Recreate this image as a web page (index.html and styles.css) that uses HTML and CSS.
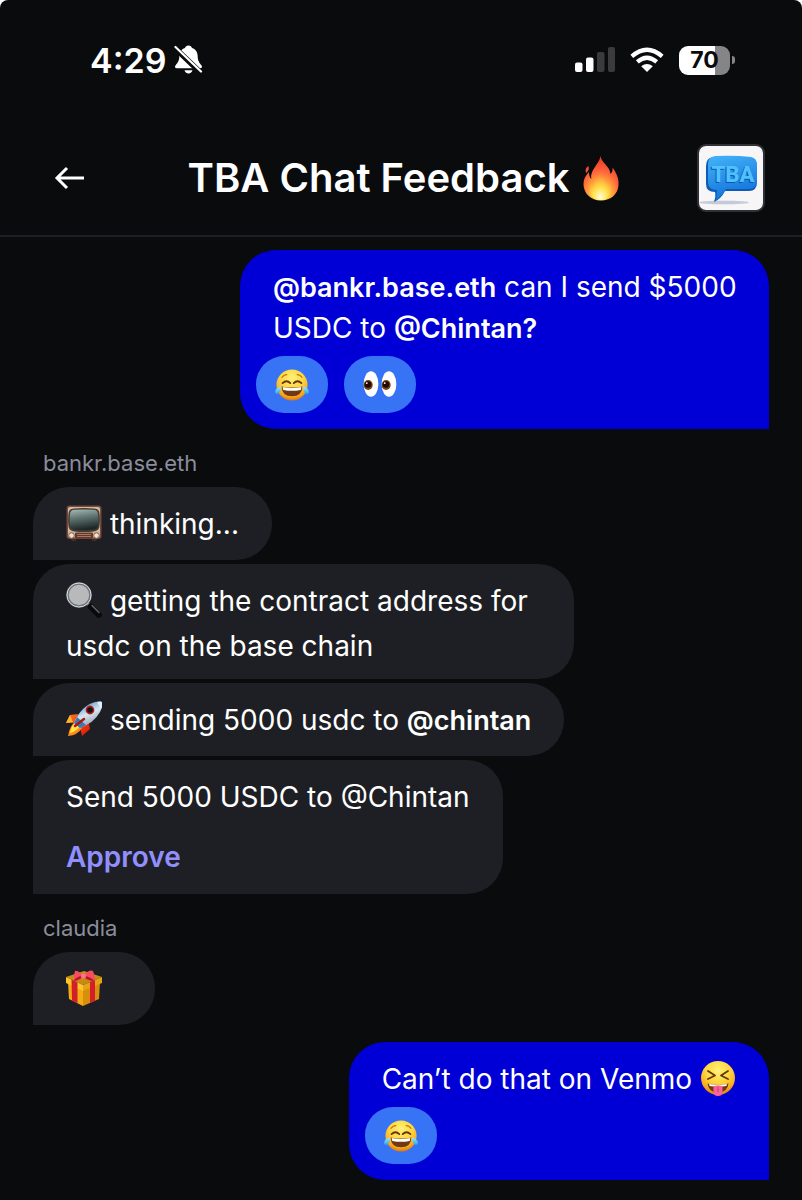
FILE: index.html
```html
<!DOCTYPE html>
<html lang="en">
<head>
<meta charset="utf-8">
<meta name="viewport" content="width=device-width, initial-scale=1">
<title>TBA Chat Feedback</title>
<link rel="stylesheet" href="styles.css">
</head>
<body>
<svg class="defs" aria-hidden="true">
  <defs>
    <radialGradient id="face" cx=".5" cy=".28" r=".72"><stop offset="0" stop-color="#fff27a"/><stop offset=".5" stop-color="#ffd63d"/><stop offset=".82" stop-color="#f9aa20"/><stop offset="1" stop-color="#dc7510"/></radialGradient>
    <linearGradient id="tear" x2="0" y2="1"><stop stop-color="#9eeaff"/><stop offset="1" stop-color="#28a5e4"/></linearGradient>
    <radialGradient id="fire" cx=".48" cy=".88" r=".85"><stop offset="0" stop-color="#fffac0"/><stop offset=".2" stop-color="#ffe24a"/><stop offset=".43" stop-color="#ff9e38"/><stop offset=".65" stop-color="#ff623c"/><stop offset="1" stop-color="#e83a1e"/></radialGradient>
    <radialGradient id="flame" cx=".5" cy=".9" r=".8"><stop stop-color="#fffde0"/><stop offset=".45" stop-color="#ffdf45"/><stop offset="1" stop-color="#ff903d" stop-opacity=".2"/></radialGradient>
    <linearGradient id="screen" x2=".2" y2="1"><stop stop-color="#a8bbb8"/><stop offset=".45" stop-color="#617573"/><stop offset="1" stop-color="#1d2929"/></linearGradient>
    <linearGradient id="hull" x1=".3" y1="0" x2=".8" y2="1"><stop stop-color="#4c8ac9"/><stop offset=".45" stop-color="#d7e7f2"/><stop offset="1" stop-color="#7c8999"/></linearGradient>
    <linearGradient id="fin" x2="1" y2="1"><stop stop-color="#ff7a21"/><stop offset="1" stop-color="#d91208"/></linearGradient>
    <linearGradient id="bubble" x2=".3" y2="1"><stop stop-color="#43b4f8"/><stop offset="1" stop-color="#1473dc"/></linearGradient>
    <symbol id="joy" viewBox="0 0 36 36">
      <circle cx="18" cy="18" r="16.5" fill="url(#face)"/>
      <path d="M7.5 9.8q2-2.8 5-2.8M23.5 7q3 0 5 2.8" fill="none" stroke="#b96d12" stroke-width="1.3" stroke-linecap="round"/>
      <path d="M8 16q4.200-4 8.200 0M19.800 16q4-4 8.200 0" fill="none" stroke="#65360d" stroke-width="1.900" stroke-linecap="round"/>
      <path d="M7 19.500q11 2.500 22 0-.5 10.500-11 10.500T7 19.500z" fill="#713814"/>
      <path d="M8 20q10 2.300 20 0l-.8 3.200q-9.200 2-18.400 0z" fill="#fff"/>
      <path d="M6.500 19.500C2.500 20.200-.3 23.200.2 26c1 3.200 5.800 1.400 6.300-6.500zM29.500 19.500c4 .7 6.800 3.700 6.300 6.500-1 3.200-5.800 1.400-6.300-6.500z" fill="url(#tear)"/>
    </symbol>
  </defs>
</svg>

<header class="top">
  <div class="status">
    <div class="status-group time-group">
      <span class="time">4:29</span>
      <svg width="29" height="32" viewBox="0 0 29 32" role="img" aria-label="Silent mode">
        <path d="M14.500 1.500c-2 0-3 1-3.500 2.400C7 5.200 5.300 8.300 5.300 12.500c0 4.500-2 6.700-4 9.200-.8 1.300 0 2.600 1.400 2.600h23.600c1.400 0 2.200-1.300 1.400-2.600-2-2.500-4-4.700-4-9.200C23.700 8.300 22 5.200 18 3.900c-.5-1.400-1.500-2.400-3.500-2.400zM10.500 26.300h8c-.4 2-2 3.200-4 3.200s-3.600-1.200-4-3.200z" fill="#fff"/>
        <path d="M2 5l25 24" stroke="#0a0b0d" stroke-width="5.500"/>
        <path d="M1.500 3L27 27.500" stroke="#fff" stroke-width="2.200" stroke-linecap="round"/>
      </svg>
    </div>
    <div class="status-group">
      <svg width="40" height="26" viewBox="0 0 40 26" role="img" aria-label="Signal, two bars of four"><rect y="15.500" width="7.500" height="9.500" rx="2" fill="#fff"/><rect x="11" y="10.500" width="7.500" height="14.500" rx="2" fill="#fff"/><rect x="22" y="5" width="7.500" height="20" rx="2" fill="#3b3b3d"/><rect x="33" y="0" width="7" height="25" rx="2" fill="#3b3b3d"/></svg>
      <svg width="34" height="26" viewBox="0 0 34 26" role="img" aria-label="Wi-Fi"><path d="M1.800 9.300q15.200-13.200 30.400 0M7.300 14.900q9.700-8.200 19.400 0" fill="none" stroke="#fff" stroke-width="4.200"/><path d="M11.200 19.300q5.800-4.500 11.600 0L17 25z" fill="#fff"/></svg>
      <div class="battery"><span class="battery-level">70</span></div>
    </div>
  </div>
  <div class="nav">
    <button class="back" type="button" aria-label="Back">
      <svg width="30" height="24" viewBox="0 0 30 24"><path d="M13 2L3 12l10 10M2.500 12H30" fill="none" stroke="#fff" stroke-width="3"/></svg>
    </button>
    <h1 class="title">TBA Chat Feedback
      <svg class="title-icon" viewBox="0 0 36 46" role="img" aria-label="Fire">
        <path d="M17.500 1C18.500 8 27 11 27.500 19c2-2 2.300-4 2-6.500 4 5.500 6.500 11 6 17.500C35 39 28 45.500 18 45.500S.5 38.500.5 29c0-5 2-8.500 5.500-12 0 3 .6 5.500 2.200 7C7 14 16 10 17.500 1zM5.500 11c-3 1.800-3.200 4-2.500 7 2.500-2 3.300-4 2.500-7z" fill="url(#fire)"/>
        <path d="M17 17c1 6 5 7 6 13 1.700-1 2.500-3 2.500-5 3 5 4 10 .5 15-2 3-5 5-8.500 5-7 0-12-6-11-12 .3-2 1-3.500 2-5 0 2.500 1 4 2.500 5C10.500 25 17 24 17 17z" fill="url(#flame)"/>
      </svg>
    </h1>
    <button class="avatar" type="button" aria-label="Group details">
      <svg viewBox="0 0 64 64">
        <rect width="64" height="64" fill="#f7f5f5"/>
        <ellipse cx="25" cy="56.500" rx="25" ry="1.800" fill="#c3cbdb"/>
        <path d="M14 11q20-2 38 1 6 1 6 9v15q0 9-8 9H26Q22 53 15 56q2-6 1-10-9 0-9-8V20q0-8 7-9z" fill="#0b5cb6"/>
        <path d="M16 10q20-1 36 1 6 1 6 8v15q0 9-8 9H27q-4 7-10 11 1-6 1-10-9 0-9-8V18q0-7 7-8z" fill="url(#bubble)"/>
        <text class="logo-shadow" x="33" y="37" text-anchor="middle">TBA</text>
        <text class="logo-text" x="34" y="35.500" text-anchor="middle">TBA</text>
      </svg>
    </button>
  </div>
</header>

<main class="chat">
  <section class="group sent">
    <div class="bubble out wide">
      <p class="text"><b>@bankr.base.eth</b> can I send $5000 USDC to <b>@Chintan?</b></p>
      <div class="reactions">
        <button class="reaction" type="button" aria-label="Tears of joy"><svg class="emoji-small"><use href="#joy"/></svg></button>
        <button class="reaction" type="button" aria-label="Eyes">
          <svg class="emoji-small" viewBox="0 0 36 36"><g fill="#fff"><ellipse cx="8.500" cy="17" rx="7.800" ry="13.500"/><ellipse cx="27.500" cy="17" rx="7.800" ry="13.500"/></g><g fill="#7b4312"><ellipse cx="5.500" cy="18" rx="4.800" ry="5.300"/><ellipse cx="24.500" cy="18" rx="4.800" ry="5.300"/></g><g fill="#1c0a04"><circle cx="5.300" cy="17.500" r="3.500"/><circle cx="24.300" cy="17.500" r="3.500"/></g><g fill="#fff"><circle cx="4" cy="16" r="1"/><circle cx="23" cy="16" r="1"/></g></svg>
        </button>
      </div>
    </div>
  </section>

  <section class="group">
    <h2 class="sender">bankr.base.eth</h2>
    <p class="bubble in"><svg class="emoji" viewBox="0 0 36 36" role="img" aria-label="Television"><path d="M4 33h6v3H6zM26 33h6l-2 3h-4z" fill="#4a2b21"/><rect x=".5" y=".5" width="35" height="33.500" rx="3" fill="#77493b"/><rect x="2" y="2" width="32" height="30.500" rx="2" fill="#d0baa0"/><path d="M8 3.500q10-1 20 0 5 0 5.500 5 .8 7 0 13-.5 4-5.500 5-10 1-20 0-5-1-5.500-5-.8-6 0-13 .5-5 5.500-5z" fill="#443a32"/><path d="M8.500 4.800q9.500-.8 19 0 4 .2 4.500 4 .7 6 0 12-.4 3.500-4.500 4-9.500.8-19 0-4.100-.5-4.500-4-.7-6 0-12 .5-3.800 4.500-4z" fill="url(#screen)"/><rect x="9" y="27.500" width="18" height="6" rx="1" fill="#64392d"/><path d="M11 29.500h14M11 31.500h14" stroke="#a57861"/><circle cx="5.500" cy="30.500" r="2.800" fill="#efe1cb" stroke="#815746"/><circle cx="30.500" cy="30.500" r="2.800" fill="#efe1cb" stroke="#815746"/></svg> thinking...</p>
    <p class="bubble in two-line"><svg class="emoji" viewBox="0 0 36 36" role="img" aria-label="Magnifying glass"><path d="M21 21l4 4" stroke="#9ba0a4" stroke-width="3"/><path d="M24.500 24.500l8.300 8.300" stroke="#08090b" stroke-width="6" stroke-linecap="round"/><path d="M26 23.500l7 7" stroke="#63666b" stroke-width="1.500" stroke-linecap="round"/><circle cx="13" cy="13" r="11.500" fill="#b7b9bb" stroke="#6b7278" stroke-width="2.600"/><circle cx="13" cy="13" r="12" fill="none" stroke="#d9e0e4" stroke-width="1"/></svg> getting the contract address for usdc on the base chain</p>
    <p class="bubble in"><svg class="emoji" viewBox="0 0 36 36" role="img" aria-label="Rocket"><path d="M12 13L4 14 0 22l10 0zM23 23l1 5-8 7-2-9z" fill="url(#fin)"/><path d="M4 14l-4 8 7-1z" fill="#ffb52b"/><path d="M9 21q-5 3-7 14 10-1 14-8z" fill="#ff8b18"/><path d="M9 22q-4 3-5 10 7-2 9-6z" fill="#ffe647"/><path d="M8 22Q15 5 29 1q5-1 7 0 1 4-2 10-6 11-20 16z" fill="url(#hull)"/><path d="M8 22l3-6 9 8-6 3z" fill="#3c78b7"/><path d="M31 1q4-1 5 0 1 3-1 7z" fill="#e2edf4"/><circle cx="24" cy="9" r="4.400" fill="#b51c16"/><circle cx="24" cy="9" r="2.800" fill="#10151d"/><path d="M9 25l9-7" stroke="#ac1711" stroke-width="2.500" stroke-linecap="round"/></svg> sending 5000 usdc to <b>@chintan</b></p>
    <div class="bubble in">
      <p class="text">Send 5000 USDC to @Chintan</p>
      <button class="approve" type="button">Approve</button>
    </div>
  </section>

  <section class="group">
    <h2 class="sender">claudia</h2>
    <p class="bubble in gift"><svg class="emoji" viewBox="0 0 36 36" role="img" aria-label="Gift"><path d="M2 12l15 7v17L3 29z" fill="#f2ad13"/><path d="M34 12l-17 7v17l16-7z" fill="#d98d0c"/><path d="M0 7L18 1l18 6-19 8z" fill="#c78b15"/><path d="M0 7l17 8v6L0 13z" fill="#ffc62b"/><path d="M36 7l-19 8v6l19-8z" fill="#e7a316"/><path d="M5.500 9.600l6 2.800v21L6 30.500zM24 12l5-2v20.800l-5 2.200z" fill="#d51f28"/><path d="M17 7Q8 14 8 9q0-5 1-8 2-1 8 4 7-6 10-4 2 5 2 8-1 4-12-2z" fill="#f64e5f"/><path d="M17 7q-6 4-9 4 0-3 9-6 10 3 11 6-5 0-11-4z" fill="#b9152c"/><circle cx="17.500" cy="6" r="2.600" fill="#ff7180"/></svg></p>
  </section>

  <section class="group sent">
    <div class="bubble out">
      <p class="text">Can’t do that on Venmo <svg class="emoji-face" viewBox="0 0 36 36" role="img" aria-label="Squinting face with tongue"><circle cx="18" cy="18" r="17" fill="url(#face)"/><path d="M8 11l7 4.500L8 19M28 11l-7 4.500 7 3.500" fill="none" stroke="#65360d" stroke-width="1.800" stroke-linecap="round" stroke-linejoin="round"/><path d="M7.500 23.500q10.500 3 21 0-1 9-10.500 9t-10.500-9z" fill="#713814"/><path d="M9 24q9 2.300 18 0l-.6 2q-8.400 1.500-16.800 0z" fill="#fff"/><path d="M13.500 26q4.500-1 9 0v5.500q0 4.500-4.500 4.500t-4.500-4.500z" fill="#f7659b"/><path d="M18 27v5" stroke="#cf386f"/></svg></p>
      <div class="reactions">
        <button class="reaction" type="button" aria-label="Tears of joy"><svg class="emoji-small"><use href="#joy"/></svg></button>
      </div>
    </div>
  </section>
</main>
</body>
</html>
```

FILE: styles.css
```css
* { box-sizing: border-box; }

html { background: #fff; }

body {
  min-height: 100vh;
  margin: 0;
  border-radius: 8px 8px 0 0;
  background: #0a0b0d;
  color: #fff;
  font-family: Inter, "Liberation Sans", sans-serif;
  font-size: 28px;
}

h1, h2, p { margin: 0; }
svg { flex: none; }

b {
  font-size: 27px;
  font-weight: 600;
}

button {
  padding: 0;
  border: 0;
  background: none;
  color: inherit;
  font: inherit;
  cursor: pointer;
}

.defs {
  position: absolute;
  width: 0;
  height: 0;
}

.top { border-bottom: 2px solid #1e1f22; }

.status {
  display: flex;
  justify-content: space-between;
  align-items: center;
  height: 120px;
  padding: 0 67px 0 90px;
}

.status-group {
  display: flex;
  align-items: center;
  gap: 15px;
}

.time-group { gap: 8px; }

.time {
  font-size: 34px;
  font-weight: 600;
}

.battery {
  display: flex;
  align-items: center;
}

.battery::after {
  content: "";
  width: 3px;
  height: 8px;
  margin-left: 2px;
  border-radius: 0 4px 4px 0;
  background: #858587;
}

.battery-level {
  width: 51px;
  border-radius: 9px;
  background: linear-gradient(to right, #fff 70%, #858587 70%);
  color: #0a0b0d;
  font-size: 23px;
  font-weight: 700;
  line-height: 29px;
  text-align: center;
}

.nav {
  display: flex;
  justify-content: space-between;
  align-items: center;
  height: 115px;
  padding: 0 37px 0 54px;
}

.back {
  display: flex;
  width: 56px;
}

.title {
  display: flex;
  align-items: center;
  gap: 14px;
  font-size: 40px;
  font-weight: 600;
}

.title-icon {
  width: 36px;
  height: 46px;
}

.avatar {
  display: block;
  width: 68px;
  height: 68px;
  overflow: hidden;
  border: 2px solid #303136;
  border-radius: 9px;
}

.avatar svg { display: block; }

.logo-text, .logo-shadow {
  font-family: Roboto, sans-serif;
  font-size: 22px;
  font-weight: 800;
}

.logo-text { fill: #51c1fc; }
.logo-shadow { fill: #0756ae; }

.chat { padding: 13px 33px 20px; }

.group {
  display: flex;
  flex-direction: column;
  align-items: flex-start;
  gap: 4px;
}

.sent { align-items: flex-end; }
.group + .sent { margin-top: 17px; }

.sender {
  margin: 20px 10px 6px;
  color: #8a8d9b;
  font-size: 22px;
  font-weight: 400;
  line-height: 28px;
}

.bubble { border-radius: 36px; }

.in {
  padding: 15px 33px 13px;
  border-bottom-left-radius: 0;
  background: #1e1f24;
  line-height: 45px;
}

.two-line {
  max-width: 541px;
  padding-bottom: 10px;
}

.gift { min-width: 122px; }

.out {
  padding: 17px 33px 16px;
  border-bottom-right-radius: 0;
  background: #0000d6;
  line-height: 41px;
}

.wide {
  max-width: 529px;
  padding-right: 24px;
}

.emoji {
  width: 36px;
  height: 36px;
  vertical-align: -7px;
}

.emoji-face {
  width: 36px;
  height: 36px;
  vertical-align: -7px;
}

.emoji-small {
  width: 34px;
  height: 34px;
}

.approve {
  display: block;
  margin: 15px 0 1px;
  color: #918fff;
  font-weight: 600;
  line-height: 45px;
}

.reactions {
  display: flex;
  gap: 16px;
  margin: 7px 0 0 -17px;
}

.reaction {
  display: grid;
  place-items: center;
  width: 72px;
  height: 57px;
  border-radius: 28px;
  background: #3773f5;
}
```
